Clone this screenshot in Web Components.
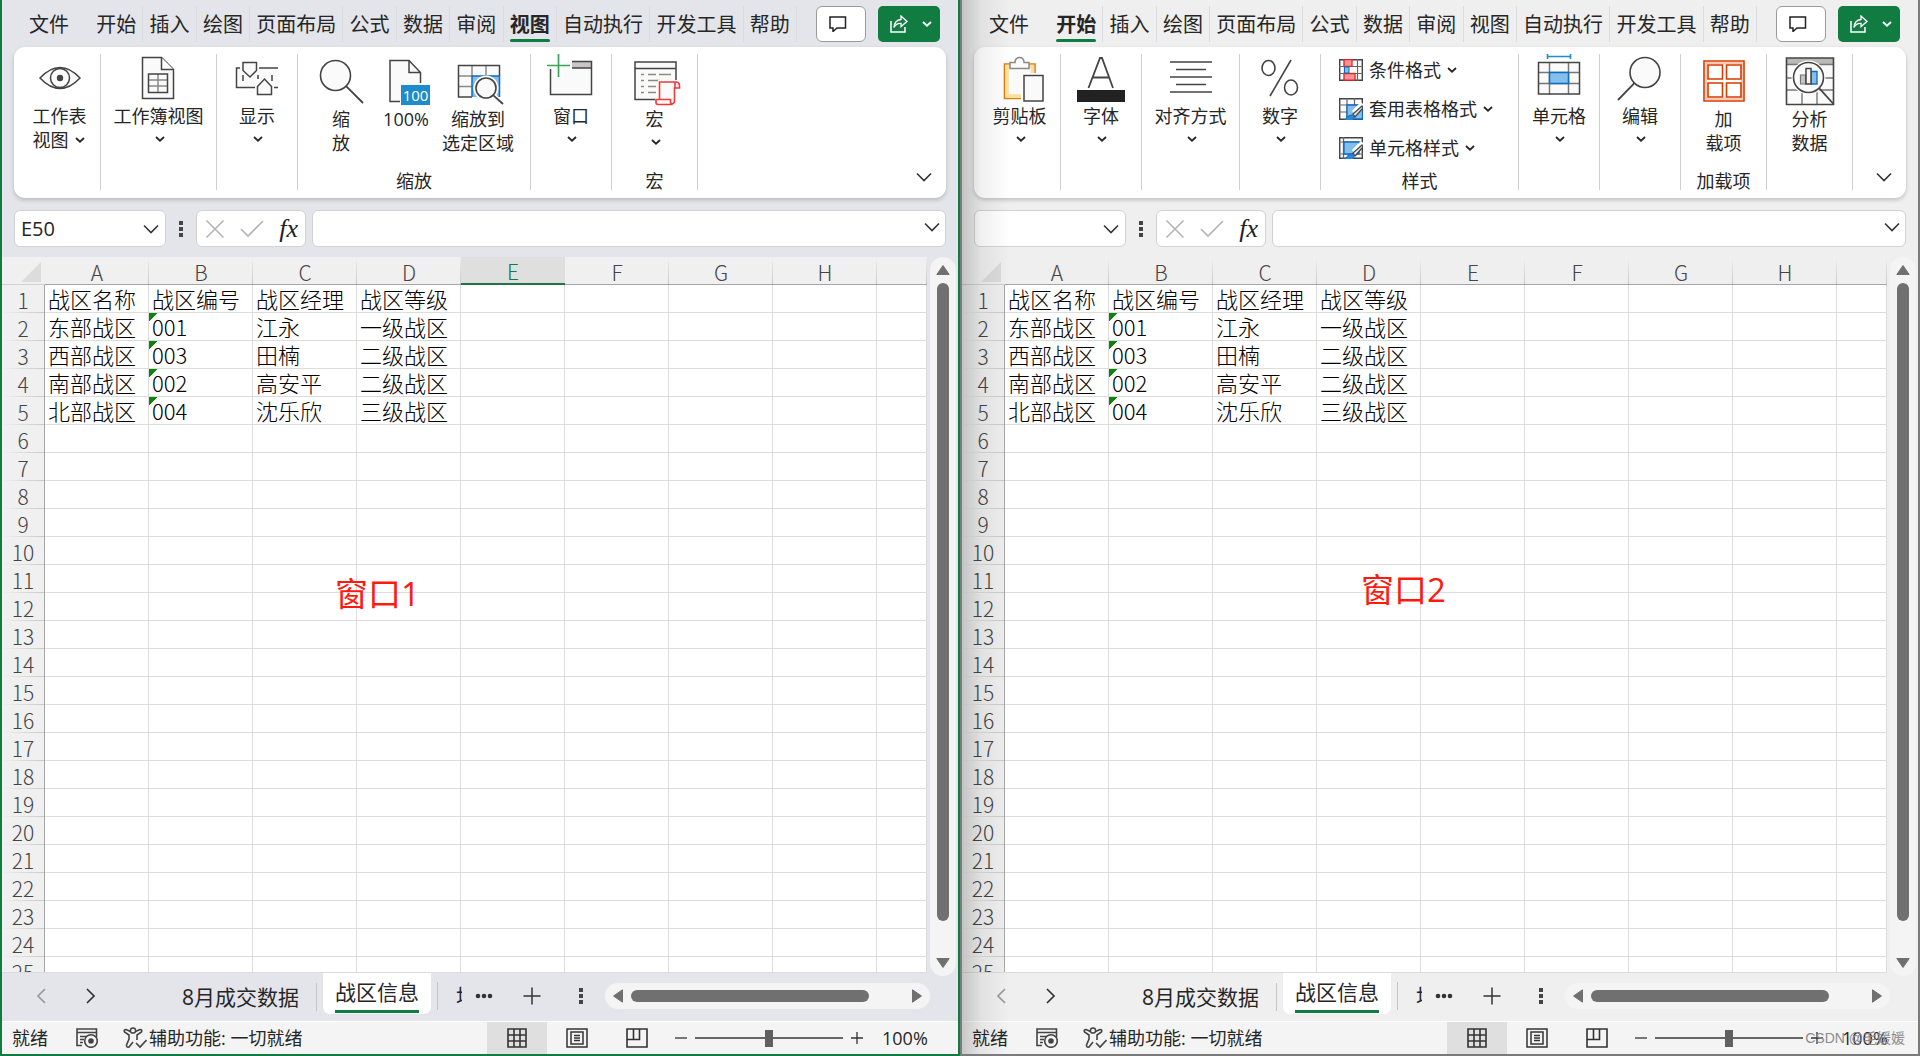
<!DOCTYPE html>
<html lang="zh-CN">
<head>
<meta charset="utf-8">
<title>战区信息</title>
<style>
  html, body { margin: 0; height: 100%; }
  body { font-family: "Open Sans", "Noto Sans CJK SC", sans-serif; color: #262626; overflow: hidden; }
</style>
</head>
<body>
<excel-desktop>
  <excel-window theme="active" label="窗口1">
    <ribbon-menu slot="menu" selected="视图"></ribbon-menu>
    <ribbon-panel slot="ribbon">
      <ribbon-group style="--w:87px;--pl:5px"><ribbon-button icon="eye" arrow="inline">工作表<br>视图</ribbon-button></ribbon-group>
      <ribbon-group style="--w:116px"><ribbon-button icon="book" arrow="below">工作簿视图</ribbon-button></ribbon-group>
      <ribbon-group style="--w:81px"><ribbon-button icon="show" arrow="below">显示</ribbon-button></ribbon-group>
      <ribbon-group caption="缩放" style="--w:233px;--pr:2px">
        <ribbon-button large icon="zoom" style="--bw:62px">缩<br>放</ribbon-button>
        <ribbon-button large icon="hundred" style="--bw:68px">100%</ribbon-button>
        <ribbon-button large icon="zoomsel" style="--bw:76px">缩放到<br>选定区域</ribbon-button>
      </ribbon-group>
      <ribbon-group style="--w:81px"><ribbon-button icon="window" arrow="below">窗口</ribbon-button></ribbon-group>
      <ribbon-group caption="宏" style="--w:86px"><ribbon-button large icon="macro" arrow="below">宏</ribbon-button></ribbon-group>
    </ribbon-panel>
    <formula-bar slot="formula" cell="E50"></formula-bar>
    <sheet-grid slot="grid" selected="E"></sheet-grid>
    <grid-note slot="grid-note" style="--x:333px;--y:315px">窗口1</grid-note>
    <sheet-tabs slot="tabs"></sheet-tabs>
    <status-bar slot="status"></status-bar>
  </excel-window>
  <excel-window theme="inactive" label="窗口2">
    <ribbon-menu slot="menu" selected="开始"></ribbon-menu>
    <ribbon-panel slot="ribbon">
      <ribbon-group style="--w:87px;--pl:5px"><ribbon-button icon="paste" arrow="below">剪贴板</ribbon-button></ribbon-group>
      <ribbon-group style="--w:81px"><ribbon-button icon="font" arrow="below">字体</ribbon-button></ribbon-group>
      <ribbon-group style="--w:98px"><ribbon-button icon="align" arrow="below">对齐方式</ribbon-button></ribbon-group>
      <ribbon-group style="--w:81px"><ribbon-button icon="percent" arrow="below">数字</ribbon-button></ribbon-group>
      <ribbon-group caption="样式" style="--w:198px">
        <ribbon-list>
          <ribbon-item icon="cond">条件格式</ribbon-item>
          <ribbon-item icon="tablefmt">套用表格格式</ribbon-item>
          <ribbon-item icon="cellfmt">单元格样式</ribbon-item>
        </ribbon-list>
      </ribbon-group>
      <ribbon-group style="--w:81px"><ribbon-button icon="cells" arrow="below">单元格</ribbon-button></ribbon-group>
      <ribbon-group style="--w:81px"><ribbon-button icon="find" arrow="below">编辑</ribbon-button></ribbon-group>
      <ribbon-group caption="加载项" style="--w:86px"><ribbon-button large icon="addin">加<br>载项</ribbon-button></ribbon-group>
      <ribbon-group style="--w:86px"><ribbon-button large icon="analyze">分析<br>数据</ribbon-button></ribbon-group>
    </ribbon-panel>
    <formula-bar slot="formula" cell=""></formula-bar>
    <sheet-grid slot="grid"></sheet-grid>
    <grid-note slot="grid-note" style="--x:399px;--y:311px">窗口2</grid-note>
    <sheet-tabs slot="tabs"></sheet-tabs>
    <status-bar slot="status"></status-bar>
  </excel-window>
  <water-mark slot="mark">CSDN @毛媛媛</water-mark>
</excel-desktop>

<script>
const RESET = `
  :host { box-sizing: border-box; }
  *, *::before, *::after { box-sizing: border-box; }
  button { font: inherit; color: inherit; background: none; border: 0; padding: 0; margin: 0; cursor: pointer; }
  input { font: inherit; color: inherit; border: 0; background: none; outline: 0; padding: 0; margin: 0; min-width: 0; }
  svg { display: block; }
`;
function define(name, css, html) {
  customElements.define(name, class extends HTMLElement {
    constructor() {
      super();
      this.attachShadow({ mode: 'open' });
    }
    connectedCallback() {
      if (this.ready) return;
      this.ready = true;
      const body = typeof html === 'function' ? html(this) : html;
      this.shadowRoot.innerHTML = `<style>${RESET}${css}</style>${body}`;
    }
  });
}

/* ---------- icons ---------- */
const K = '#444';
const magnify = (cx, cy, r, x2, y2) => {
  const s = x2 > cx ? 1 : -1, d = r * 0.7071;
  return `<circle cx="${cx}" cy="${cy}" r="${r}" fill="#fafafa" stroke="${K}" stroke-width="1.6"/><path d="M${cx + s * d} ${cy + d}L${x2} ${y2}" stroke="${K}" stroke-width="1.8"/>`;
};
const brush = `<path d="M24 6L15 15" stroke="#fff" stroke-width="6"/><path d="M23 8l-9 8 2 3 8-9z" fill="#e8e8e8" stroke="${K}" stroke-width="1.3"/><path d="M5 22c3 0 3-5 7-5 3 0 4 3 2 5-2 1.500-7 1.500-9 0z" fill="#2b88d8" stroke="#0f6cbd"/>`;
const ICONS = {
  eye: [52, 52, `<path d="M6 24C14 15.500 20 13.500 26 13.500S38 15.500 46 24C38 32.500 32 34.500 26 34.500S14 32.500 6 24z" fill="#fafafa" stroke="${K}" stroke-width="1.5"/><circle cx="26" cy="24" r="9.500" fill="none" stroke="${K}" stroke-width="1.5"/><circle cx="26" cy="24" r="3.200" fill="${K}"/>`],
  book: [52, 52, `<path d="M9.500 3.500h19l12 12v29h-31z" fill="#fafafa" stroke="${K}" stroke-width="1.500"/><path d="M28.500 3.500v12h12" fill="#fff" stroke="${K}" stroke-width="1.500"/><path d="M16 26h18M16 32h18M25 20v18" stroke="#8a8a86" stroke-width="1.500"/><path d="M15.500 20h19v18.500h-19z" fill="none" stroke="${K}" stroke-width="1.500"/>`],
  show: [52, 52, `<path d="M5.500 14h42v20h-42z" fill="#fafafa"/><path d="M9 14H5.500v19.500H24M28 14H47M43 33.500H47M12 21v6M27 21v4M41 21v6" fill="none" stroke="${K}" stroke-width="1.500"/><path d="M12 8.500h13.500v8L19 23l-7-6.500z" fill="#fafafa" stroke="${K}" stroke-width="1.500"/><path d="M26.500 40.500h14v-8L33.500 25l-7 7.500z" fill="#fafafa" stroke="${K}" stroke-width="1.500"/>`],
  zoom: [52, 52, magnify(20.5, 21.5, 15, 48, 49)],
  hundred: [52, 52, `<path d="M10 6.500h19l11.500 12v29H10z" fill="#fafafa"/><path d="M20 47.500H10v-41h19l11.500 12V29M29 6.500v12h11.500" fill="none" stroke="${K}" stroke-width="1.500"/><path d="M21 31h29v20H21z" fill="#1e8bcd"/><text x="35.500" y="46.500" font-size="15" text-anchor="middle" fill="#fff">100</text>`],
  zoomsel: [52, 52, `<path d="M6.500 11.500h41V43h-41z" fill="#fafafa"/><path d="M20 22h27.500v21H20z" fill="#83beec"/><path d="M6.500 22H20M6.500 32.500H20M20 11.500V22M34 11.500V22" stroke="#8a8a86" stroke-width="1.500"/><path d="M47.500 22V11.500h-41V43H20" fill="none" stroke="${K}" stroke-width="1.500"/><path d="M20 43V22h27.500v21" fill="none" stroke="#0f6cbd" stroke-width="1.500"/><circle cx="34" cy="34" r="12.500" fill="#fff"/><path d="M42 42l8 8" stroke="#fff" stroke-width="5"/>${magnify(34, 34, 10, 51, 50)}`],
  window: [52, 52, `<path d="M5.500 7.500h41v33h-41z" fill="#fafafa"/><path d="M27 7.500h19.500V14H27z" fill="#c8c6c4"/><path d="M5.500 15v25.500h41v-33H27M27 14h19.500" fill="none" stroke="${K}" stroke-width="1.500"/><path d="M0 0h26v9H0zM9 9h9v15H9z" fill="#fff"/><path d="M2 11.500h23M13.500 0v23" stroke="#3aa757" stroke-width="1.700"/>`],
  macro: [52, 52, `<path d="M6 8h41v37.500H6z" fill="#fafafa" stroke="${K}" stroke-width="1.500"/><path d="M6 14.500h41" stroke="${K}" stroke-width="1.500"/><path d="M12 20.500h3M19 20.500h8M30 20.500h12M12 26.500h3M19 26.500h12M12 32.500h3M19 32.500h8M12 38.500h3M19 38.500h8" stroke="#8a8a86" stroke-width="1.500"/><path d="M29 26h22v25H26v-7h3z" fill="#fff"/><path d="M30.500 46V28h16.500q3 0 3.500 3v3h-5v13q0 3-3.500 3M46 34v-6" fill="#fafafa" stroke="#f03a3a" stroke-width="1.600"/><path d="M27 45.500h14.500v2q0 3 2 3H29q-2 0-2-2z" fill="#fafafa" stroke="#f03a3a" stroke-width="1.600"/>`],
  paste: [52, 52, `<path d="M10.500 10h30.500v34.500H10.500z" fill="#fafafa" stroke="#e07a12" stroke-width="1.600"/><path d="M13 12.500h25.500v29.500H13z" fill="none" stroke="#fae09a" stroke-width="3.500"/><path d="M27 19h25v31H27z" fill="#fff"/><path d="M16 14.500v-6h5q0-5 4.500-5t4.500 5h5v6z" fill="#fafafa" stroke="#8a8a86" stroke-width="1.500"/><path d="M30 21.500h19V47H30z" fill="#fafafa" stroke="${K}" stroke-width="1.500"/>`],
  font: [52, 52, `<path d="M13.500 34L25 4h2L38 34M17.500 23.500h17" fill="none" stroke="${K}" stroke-width="1.800"/><path d="M2 36h48v12H2z" fill="#222"/>`],
  align: [52, 52, `<path d="M5 8h42M11 15.500h30M5 23h42M11 30.500h30M5 38h42" stroke="${K}" stroke-width="1.600"/>`],
  percent: [52, 52, `<ellipse cx="14.500" cy="14" rx="6.500" ry="7.500" fill="none" stroke="${K}" stroke-width="1.600"/><ellipse cx="37" cy="33.500" rx="6.500" ry="7.500" fill="none" stroke="${K}" stroke-width="1.600"/><path d="M37 6L16 42" stroke="${K}" stroke-width="1.600"/>`],
  cells: [52, 52, `<path d="M5.500 8.500h41v31.500h-41z" fill="#fafafa"/><path d="M16.500 8.500v32M35.500 8.500v32M5.500 18.500h41M5.500 29.500h41" stroke="#777" stroke-width="1.500"/><path d="M5.500 8.500h41v31.500h-41z" fill="none" stroke="${K}" stroke-width="1.500"/><path d="M16.500 18.500h19v11h-19z" fill="#83beec" stroke="#0f6cbd" stroke-width="1.500"/><path d="M14.500 2.500h23M14.500 0v5M37.500 0v5" stroke="#1e8bcd" stroke-width="1.600"/>`],
  find: [52, 52, magnify(31, 18.5, 15, 4, 46)],
  addin: [52, 52, `<path d="M6 7h40v40H6z" fill="#fff" stroke="#d83b01" stroke-width="1.600"/><path d="M8 9h36v36H8z" fill="none" stroke="#f5b9a0" stroke-width="1.500"/><path d="M10 11h14.500v14H10zM28.500 11H43v14H28.500zM10 29h14.500v14H10zM28.500 29H43v14H28.500z" fill="#fff" stroke="#d83b01" stroke-width="1.600"/>`],
  analyze: [52, 52, `<path d="M2.500 4h47v46.500h-47z" fill="#fafafa"/><path d="M2.500 4h47v6.500h-47z" fill="#b9b9b7"/><path d="M2.500 10.500h47M2.500 24h8M40 24h10M2.500 36h13M34 36h16M18 38v12M33 36v14" stroke="#777" stroke-width="1.400"/><path d="M2.500 4h47v46.500h-47z" fill="none" stroke="${K}" stroke-width="1.600"/><circle cx="24.500" cy="23.500" r="17" fill="#fff"/>${magnify(24.5, 23.5, 15, 49.5, 50)}<path d="M16.500 21h5v9h-5z" fill="#c8c6c4" stroke="#777" stroke-width="1.200"/><path d="M27 17.500h6V30h-6z" fill="#83beec" stroke="#0f6cbd" stroke-width="1.300"/><path d="M22 14.500h5V30h-5z" fill="#fafafa" stroke="${K}" stroke-width="1.500"/>`],
  cond: [24, 22, `<path d="M.7.700h22.600v20.600H.7z" fill="#fafafa" stroke="${K}" stroke-width="1.400"/><path d="M5.500 0v22M18.500 0v22M0 7.500h24M0 14.500h24" stroke="#666" stroke-width="1.200"/><path d="M10 8h8v6h-8z" fill="#fff"/><path d="M5 .7h8v6.600H5zM5 14.500h11v6.600H5z" fill="#ff9494" stroke="#e1262b" stroke-width="1.300"/><path d="M5.500 8h4.500v6H5.500z" fill="#83beec" stroke="#0f6cbd"/>`],
  tablefmt: [24, 22, `<path d="M.7.700h22.600v20.600H.7z" fill="#fafafa" stroke="${K}" stroke-width="1.400"/><path d="M8 0v22M15.500 0v8M0 7h24M0 14h8" stroke="#666" stroke-width="1.200"/><path d="M8 7h15.500v14H8z" fill="#83beec" stroke="#0f6cbd" stroke-width="1.300"/>${brush}`],
  cellfmt: [24, 22, `<path d="M.7.700h22.600v20.600H.7z" fill="#fafafa" stroke="${K}" stroke-width="1.400"/><path d="M4.500 0v22M0 5h24M0 17h24" stroke="#666" stroke-width="1.200"/><path d="M5 5h15v12H5z" fill="#83beec" stroke="#0f6cbd" stroke-width="1.300"/>${brush}`],
  chev: [10, 6, `<path d="M1 1l4 3.700L9 1" fill="none" stroke="currentColor" stroke-width="1.800"/>`],
  down: [16, 10, `<path d="M1 1.500l7 7 7-7" fill="none" stroke="#333" stroke-width="1.600"/>`],
  left: [10, 16, `<path d="M9 1L2 8l7 7" fill="none" stroke="#999" stroke-width="1.700"/>`],
  right: [10, 16, `<path d="M1 1l7 7-7 7" fill="none" stroke="#333" stroke-width="1.700"/>`],
  comment: [18, 16, `<path d="M1 1h15.500v11H8l-4 3.500V12H1z" fill="none" stroke="#222" stroke-width="1.500"/>`],
  share: [18, 18, `<path d="M1 6v11h14v-5" fill="none" stroke="#fff" stroke-width="1.500"/><path d="M11 1l6 5.500-6 5V8.500Q6.500 8 4 12.500 4.500 5 11 4.500z" fill="none" stroke="#fff" stroke-width="1.300"/>`],
  cancel: [20, 20, `<path d="M1.500 1.500l17 17M18.500 1.500l-17 17" stroke="#b4b4b4" stroke-width="1.600"/>`],
  check: [24, 18, `<path d="M1 9l7 7L23 1" fill="none" stroke="#b4b4b4" stroke-width="1.600"/>`],
  vdots: [4, 16, `<path d="M0 0h4v4H0zM0 6h4v4H0zM0 12h4v4H0z" fill="#444"/>`],
  hdots: [18, 6, `<circle cx="3" cy="3" r="2.300" fill="#333"/><circle cx="9" cy="3" r="2.300" fill="#333"/><circle cx="15" cy="3" r="2.300" fill="#333"/>`],
  plus: [18, 18, `<path d="M9 0.500v17M.5 9h17" stroke="#333" stroke-width="1.500"/>`],
  up: [14, 10, `<path d="M7 .5L13.200 9.500H.8z" fill="#707070" stroke="#707070" stroke-linejoin="round"/>`],
  dn: [14, 10, `<path d="M7 9.500L13.200 .5H.8z" fill="#707070" stroke="#707070" stroke-linejoin="round"/>`],
  lt: [10, 14, `<path d="M.5 7L9.500 .8v12.400z" fill="#707070" stroke="#707070" stroke-linejoin="round"/>`],
  rt: [10, 14, `<path d="M9.500 7L.5 .8v12.400z" fill="#707070" stroke="#707070" stroke-linejoin="round"/>`],
  record: [22, 20, `<path d="M6 17.500H1V1h19.500v8M1 4.500h19.500M4 8.500h7M4 11.500h4M4 14.500h3" fill="none" stroke="${K}" stroke-width="1.600"/><circle cx="15" cy="13" r="6.300" fill="#f4f4f4" stroke="${K}" stroke-width="1.600"/><circle cx="15" cy="13" r="2.800" fill="${K}"/>`],
  access: [24, 22, `<circle cx="10" cy="3.500" r="2.600" fill="none" stroke="${K}" stroke-width="1.500"/><path d="M7.500 4.500L3 2.500Q.5 2.500 1.500 5L6 8v4l-2.500 6q0 3 2.500 2l4-5M12.500 4.500L17 2.500q2.500 0 1.500 2.500L14 8v5M13 16l4 4 6.500-7" fill="none" stroke="${K}" stroke-width="1.600"/>`],
  normal: [20, 20, `<path d="M1 1h18v18H1zM7 1v18M13 1v18M1 7h18M1 13h18" fill="none" stroke="#333" stroke-width="1.600"/>`],
  layout: [22, 20, `<path d="M1 1h20v18H1zM5 4h12v12H5zM8 7.500h6M8 10h6M8 12.500h6" fill="none" stroke="#333" stroke-width="1.500"/>`],
  pagebrk: [22, 20, `<path d="M1 1h20v18H1zM1 11.500h12.500V1M7.500 1v10.500" fill="none" stroke="#333" stroke-width="1.600"/>`],
  minus: [12, 12, `<path d="M0 6h12" stroke="#333" stroke-width="1.300"/>`],
  add: [12, 12, `<path d="M0 6h12M6 0v12" stroke="#333" stroke-width="1.300"/>`]
};
define('ui-icon', `:host { display: block; flex: none; }`, el => {
  const [w, h, body] = ICONS[el.getAttribute('name')];
  return `<svg width="${w}" height="${h}" viewBox="0 0 ${w} ${h}" fill="none" aria-hidden="true">${body}</svg>`;
});

/* ---------- desktop and windows ---------- */
define('excel-desktop', `
  :host { display: flex; position: relative; height: 100vh; }
  ::slotted(excel-window) { flex: 1 1 0; min-width: 0; }
`, `<slot></slot><slot name="mark"></slot>`);

define('water-mark', `
  :host { position: absolute; right: 15px; bottom: 8px; font: 14px/20px "Liberation Sans", "Noto Sans CJK SC", sans-serif; color: #8c8c8c; pointer-events: none; }
`, `<slot></slot>`);

define('excel-window', `
  :host { display: flex; flex-direction: column; position: relative;
    border: 2px solid #107c41; border-top: 0; background: #e4e5ea; --head: #f0f0f0; }
  :host([theme="inactive"]) { border-color: #7b7b7b; background: #efefef; --head: #efefef; }
  :host([theme="inactive"])::after { content: ""; position: absolute; inset: 0 auto 0 0; width: 48px; pointer-events: none;
    background: linear-gradient(to right, rgba(0,0,0,.18), rgba(0,0,0,.06) 40%, transparent); }
  main { flex: 1; min-height: 0; display: flex; margin-top: 10px; position: relative; }
  ::slotted(sheet-grid) { flex: 1; min-width: 0; }
`, `<slot name="menu"></slot><slot name="ribbon"></slot><slot name="formula"></slot>
<main><slot name="grid"></slot><slot name="grid-note"></slot></main>
<slot name="tabs"></slot><slot name="status"></slot>`);

define('grid-note', `
  :host { position: absolute; left: var(--x); top: var(--y); font-size: 33px; line-height: 44px; color: #ff1a10; white-space: nowrap; }
`, `<slot></slot>`);

/* ---------- menu ---------- */
define('ribbon-menu', `
  :host { display: flex; height: 47px; padding: 6px 18px 0 20px; font-size: 20px; line-height: 38px; align-items: flex-start; }
  nav { flex: 1; display: flex; }
  button { white-space: nowrap; height: 36px; }
  .file { padding: 0 7px; margin-right: 14px; }
  .tab { flex: 1 1 auto; border-right: 1px solid #dcdce0; }
  .tab span { display: block; width: fit-content; margin: 0 auto; position: relative; height: 36px; }
  .on span { font-weight: 700; }
  .on span::after { content: ""; position: absolute; left: 0; right: 0; bottom: 0; height: 3px; border-radius: 2px; background: #107c41; }
  .comment { width: 50px; height: 36px; margin-left: 19px; border: 1px solid #9a9a9a; border-radius: 6px; background: #fff; display: flex; align-items: center; justify-content: center; padding-right: 6px; }
  .share { width: 62px; height: 36px; margin-left: 12px; border-radius: 5px; background: #107c41; color: #fff; display: flex; align-items: center; justify-content: space-between; padding: 0 8px 0 12px; }
`, el => {
  const sel = el.getAttribute('selected');
  const tabs = ['开始', '插入', '绘图', '页面布局', '公式', '数据', '审阅', '视图', '自动执行', '开发工具', '帮助'];
  return `<nav><button class="file">文件</button>${tabs.map(t => `<button class="tab${t === sel ? ' on' : ''}"><span>${t}</span></button>`).join('')}</nav>
  <button class="comment" aria-label="批注"><ui-icon name="comment"></ui-icon></button>
  <button class="share" aria-label="共享"><ui-icon name="share"></ui-icon><ui-icon name="chev"></ui-icon></button>`;
});

/* ---------- ribbon ---------- */
define('ribbon-panel', `
  :host { display: flex; height: 151px; margin: 0 12px; padding: 7px 0 8px; background: #fff; border-radius: 11px; box-shadow: 0 2px 4px rgba(0,0,0,.2); font-size: 18px; line-height: 24px; }
  .more { margin: auto 14px 8px auto; }
`, `<slot></slot><button class="more" aria-label="功能区显示选项"><ui-icon name="down"></ui-icon></button>`);

define('ribbon-group', `
  :host { display: flex; flex-direction: column; justify-content: space-between; flex: none; width: var(--w); border-right: 1px solid #cfcfcf; }
  .row { display: flex; justify-content: center; padding: 0 var(--pr, 0) 0 var(--pl, 0); }
  .cap { text-align: center; line-height: 18px; }
`, el => `<div class="row"><slot></slot></div>${el.hasAttribute('caption') ? `<div class="cap">${el.getAttribute('caption')}</div>` : ''}`);

define('ribbon-button', `
  :host { display: block; width: var(--bw, auto); }
  button { display: flex; flex-direction: column; align-items: center; width: 100%; white-space: nowrap; }
  :host([large]) .label { margin-top: 3px; }
  ui-icon { height: 50px; }
  .label { display: block; text-align: center; }
  :host([arrow="inline"]) .label { text-align: left; }
  .arrow { height: 24px; padding: 8px 0 0 2px; }
  .tail { display: inline-block; padding: 0 0 4px 6px; }
  .tail ui-icon { height: 6px; }
`, el => {
  const a = el.getAttribute('arrow');
  return `<button><ui-icon name="${el.getAttribute('icon')}"></ui-icon>
  <span class="label"><slot></slot>${a === 'inline' ? '<span class="tail"><ui-icon name="chev"></ui-icon></span>' : ''}</span>
  ${a === 'below' ? '<ui-icon class="arrow" name="chev"></ui-icon>' : ''}</button>`;
});

define('ribbon-list', `
  :host { display: flex; flex-direction: column; gap: 15px; width: 100%; padding: 4px 0 0 18px; }
`, `<slot></slot>`);
define('ribbon-item', `
  :host { display: block; }
  button { display: flex; align-items: center; height: 24px; white-space: nowrap; }
  span { padding: 0 6px; }
`, el => `<button><ui-icon name="${el.getAttribute('icon')}"></ui-icon><span><slot></slot></span><ui-icon name="chev"></ui-icon></button>`);

/* ---------- formula bar ---------- */
define('formula-bar', `
  :host { display: flex; align-items: center; margin: 12px 12px 0 12px; height: 37px; font-size: 20px; }
  .box { display: flex; align-items: center; height: 37px; background: #fff; border: 1px solid #d2d2d4; border-radius: 6px; }
  .name { width: 152px; padding: 0 6px; }
  .name input, .formula input { flex: 1; height: 100%; }
  .dots { margin: 0 13px; }
  .tools { width: 110px; padding: 0 7px 0 8px; justify-content: space-between; }
  .fx { font: italic 400 26px/34px "Liberation Serif", serif; color: #222; }
  .formula { flex: 1; margin-left: 6px; padding: 0 5px 4px 6px; }
`, el => `<div class="box name"><input aria-label="名称框" value="${el.getAttribute('cell')}"><button aria-label="展开名称框"><ui-icon name="down"></ui-icon></button></div>
<ui-icon class="dots" name="vdots"></ui-icon>
<div class="box tools"><button aria-label="取消"><ui-icon name="cancel"></ui-icon></button><button aria-label="输入"><ui-icon name="check"></ui-icon></button><button class="fx">fx</button></div>
<div class="box formula"><input aria-label="编辑栏"><button aria-label="展开编辑栏"><ui-icon name="down"></ui-icon></button></div>`);

/* ---------- grid ---------- */
const DATA = [
  ['战区名称', '战区编号', '战区经理', '战区等级'],
  ['东部战区', '001', '江永', '一级战区'],
  ['西部战区', '003', '田楠', '二级战区'],
  ['南部战区', '002', '高安平', '二级战区'],
  ['北部战区', '004', '沈乐欣', '三级战区']
];
const COLS = ['A', 'B', 'C', 'D', 'E', 'F', 'G', 'H', ''];
define('sheet-grid', `
  :host { display: flex; min-height: 0; }
  .view { flex: 1; min-width: 0; overflow: hidden; border-bottom: 1px solid #dcdcdc; background: #fff; }
  table { table-layout: fixed; width: 100%; border-collapse: separate; border-spacing: 0; font: 300 21px/27px "Noto Sans CJK SC", sans-serif; }
  .rh { width: 43px; } .c { width: 104px; }
  tr { height: 28px; }
  th, td { padding: 0; height: 28px; font-weight: 300; white-space: nowrap; }
  thead th { background: linear-gradient(to bottom, transparent, #c8c8c8) right / 1px 100% no-repeat var(--head); border-bottom: 1px solid #a6a6a6; color: #444; padding-top: 3px; line-height: 24px; }
  thead th.on { background: #dfdfdf; color: #107c41; border-bottom: 2px solid #217346; line-height: 23px; }
  thead th.corner { border-right: 0; background: var(--head); border-bottom-color: #d0d0d0; padding-left: 19px; }
  tbody th { background: linear-gradient(to right, transparent, #c8c8c8) bottom / 100% 1px no-repeat var(--head); border-right: 1px solid #a6a6a6; color: #444; padding-top: 1px; line-height: 26px; }
  td { border-right: 1px solid #dcdcdc; border-bottom: 1px solid #dcdcdc; padding: 0 0 0 3px; line-height: 27px; font-size: 22px; color: #000; }
  td.err { background: linear-gradient(135deg, #0a850a 6px, transparent 6px) no-repeat; }
  .scroll { display: flex; flex-direction: column; align-items: center; gap: 8px; width: 26px; margin: 0 2px -3px 3px; padding: 8px 0; border-radius: 13px; background: #f4f4f4; }
  .thumb { width: 12px; flex: 1; margin-bottom: 29px; border-radius: 6px; background: #707070; }
`, el => {
  const sel = el.getAttribute('selected');
  const head = COLS.map(c => `<th scope="col"${c && c === sel ? ' class="on"' : ''}>${c}</th>`).join('');
  const rows = Array.from({ length: 25 }, (_, r) =>
    `<tr><th scope="row">${r + 1}</th>${COLS.map((_, c) => { const v = (DATA[r] || [])[c] || ''; return `<td${/^\d/.test(v) ? ' class="err"' : ''}>${v}</td>`; }).join('')}</tr>`).join('');
  return `<div class="view"><table><colgroup><col class="rh">${'<col class="c">'.repeat(8)}<col></colgroup>
  <thead><tr><th class="corner"><svg width="20" height="20"><path d="M20 0v20H0z" fill="#dcdcdc"/></svg></th>${head}</tr></thead><tbody>${rows}</tbody></table></div>
  <div class="scroll"><ui-icon name="up"></ui-icon><div class="thumb"></div><ui-icon name="dn"></ui-icon></div>`;
});

/* ---------- sheet tabs ---------- */
define('sheet-tabs', `
  :host { display: flex; align-items: center; height: 48px; padding: 0 28px 2px 0; font-size: 21px; line-height: 28px; }
  .nav { width: 50px; display: flex; justify-content: center; }
  .prev { margin-left: 14px; }
  .tabs { display: flex; align-self: stretch; margin-left: 49px; }
  .tabs button { white-space: nowrap; }
  .t1 { align-self: center; height: 28px; padding: 0 17px; border-right: 1px solid #c4c4c8; margin-top: 1px; }
  .t2 { align-self: flex-start; height: 41px; width: 108px; margin: 0 6px; background: #fff; border-radius: 0 0 7px 7px; }
  .t2 span { display: block; margin: 0 12px; height: 38px; padding-top: 3px; border-bottom: 3px solid #107c41; }
  .t3 { align-self: center; height: 28px; border-left: 1px solid #c4c4c8; padding-left: 18px; width: 25px; overflow: hidden; text-align: left; }
  .dots { margin-left: 13px; } .plus { margin-left: 30px; } .split { margin-left: 38px; }
  .scroll { flex: 1; margin-left: 22px; height: 26px; border-radius: 13px; background: #f4f4f4; display: flex; align-items: center; padding: 0 8px; gap: 8px; }
  .thumb { flex: 1; height: 12px; border-radius: 6px; background: #707070; margin-right: 35px; }
`, `<button class="nav prev" aria-label="上一张"><ui-icon name="left"></ui-icon></button><button class="nav" aria-label="下一张"><ui-icon name="right"></ui-icon></button>
<div class="tabs"><button class="t1">8月成交数据</button><button class="t2"><span>战区信息</span></button><button class="t3">地</button></div>
<button class="dots" aria-label="更多工作表"><ui-icon name="hdots"></ui-icon></button><button class="plus" aria-label="新工作表"><ui-icon name="plus"></ui-icon></button><ui-icon class="split" name="vdots"></ui-icon>
<div class="scroll"><ui-icon name="lt"></ui-icon><div class="thumb"></div><ui-icon name="rt"></ui-icon></div>`);

/* ---------- status bar ---------- */
define('status-bar', `
  :host { display: flex; align-items: center; height: 33px; padding: 0 28px 0 10px; background: #f4f4f4; border-top: 1px solid #fff; font-size: 18px; line-height: 24px; white-space: nowrap; }
  button { display: flex; align-items: center; }
  .rec { margin-left: 28px; }
  .acc { margin-left: 25px; gap: 2px; }
  .views { display: flex; align-self: stretch; margin-left: auto; }
  .views button { width: 60px; justify-content: center; }
  .views .on { background: #dfdfdf; }
  .minus { margin-left: 8px; }
  input { -webkit-appearance: none; appearance: none; width: 148px; height: 20px; margin: 0 8px; background: linear-gradient(#666, #666) center / 100% 2px no-repeat; }
  input::-webkit-slider-thumb { -webkit-appearance: none; width: 8px; height: 17px; background: #606060; }
  .pct { margin-left: 19px; min-width: 48px; }
`, `<span>就绪</span><button class="rec" aria-label="录制宏"><ui-icon name="record"></ui-icon></button>
<button class="acc"><ui-icon name="access"></ui-icon><span>辅助功能: 一切就绪</span></button>
<div class="views"><button class="on" aria-label="普通"><ui-icon name="normal"></ui-icon></button><button aria-label="页面布局"><ui-icon name="layout"></ui-icon></button><button aria-label="分页预览"><ui-icon name="pagebrk"></ui-icon></button></div>
<button class="minus" aria-label="缩小"><ui-icon name="minus"></ui-icon></button><input type="range" min="0" max="100" value="50" aria-label="显示比例"><button aria-label="放大"><ui-icon name="add"></ui-icon></button><button class="pct">100%</button>`);
</script>
</body>
</html>
